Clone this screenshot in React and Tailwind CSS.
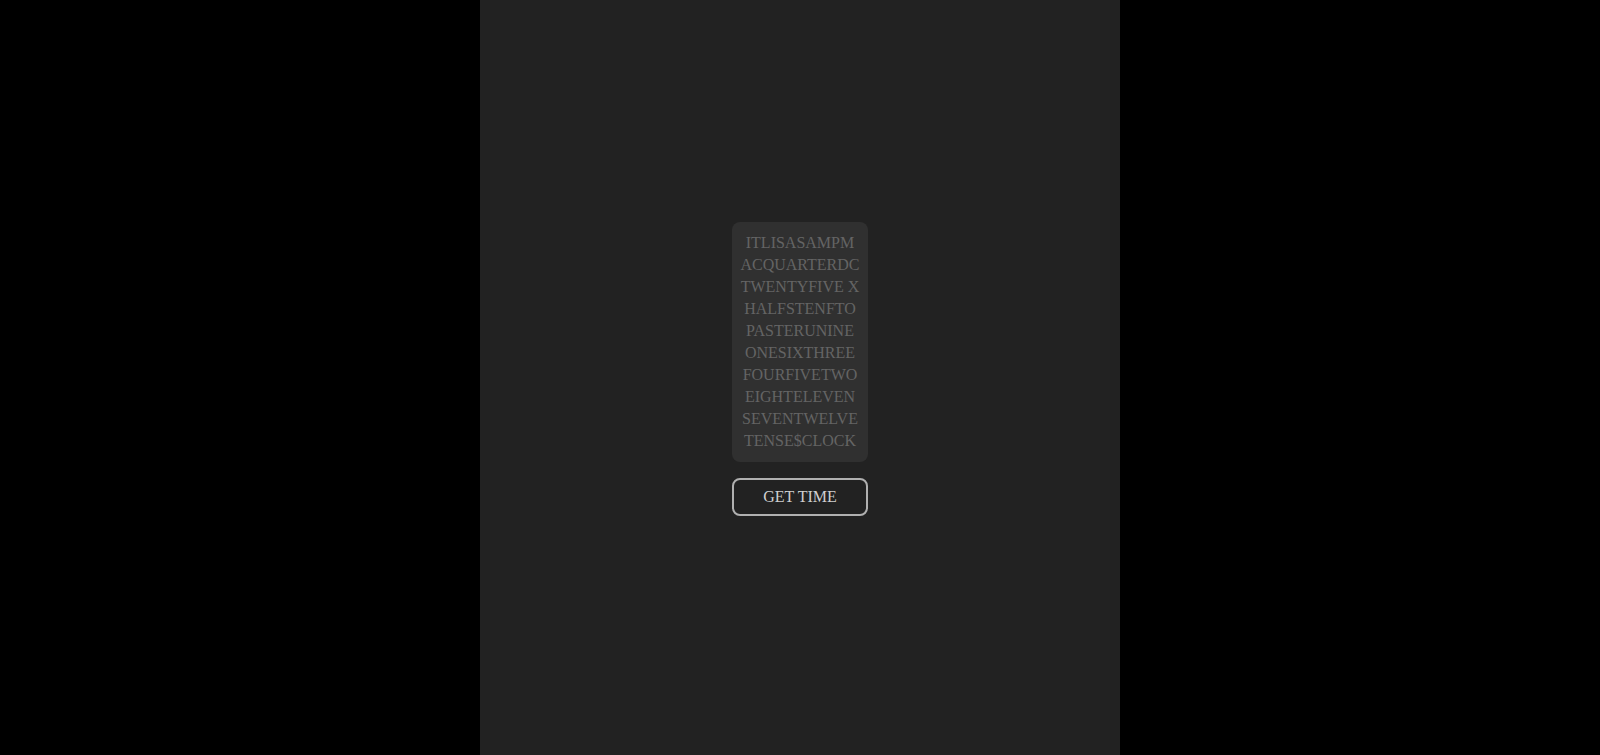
import React, { useState } from 'react';

const ROWS = [
  'ITLISASAMPM',
  'ACQUARTERDC',
  'TWENTYFIVE X',
  'HALFSTENFTO',
  'PASTERUNINE',
  'ONESIXTHREE',
  'FOURFIVETWO',
  'EIGHTELEVEN',
  'SEVENTWELVE',
  'TENSE$CLOCK',
];

export default function App() {
  const [time, setTime] = useState(null);

  return (
    <div className="flex h-[755px] w-full justify-center bg-black font-['Liberation_Serif',serif]">
      <main className="flex h-full w-[640px] flex-col items-center justify-center bg-[#222222] pb-[17px]">
        <div className="flex w-fit flex-col gap-4">
          <div className="rounded-lg bg-[#303030] px-2 py-[10px] text-center text-base leading-[22px] text-[#646464]">
            {ROWS.map(row => (
              <div key={row} className="whitespace-pre">{row}</div>
            ))}
          </div>
          <button
            onClick={() => setTime(new Date())}
            className="h-[38px] rounded-lg border-2 border-[#b0b0b0] bg-transparent text-base text-[#cfcfcf]"
          >
            GET TIME
          </button>
        </div>
      </main>
    </div>
  );
}
